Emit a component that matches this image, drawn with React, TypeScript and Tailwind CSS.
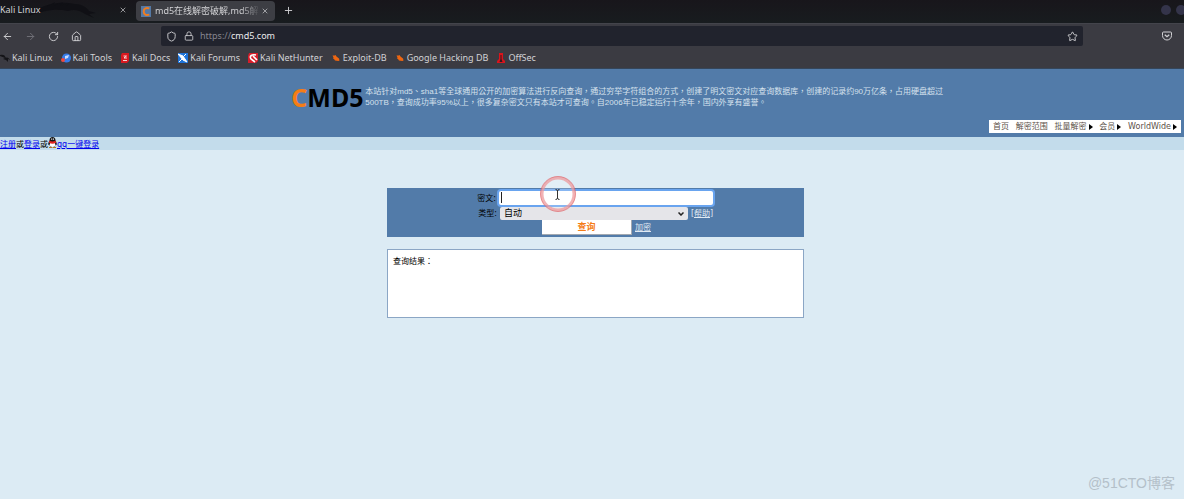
import {
    ArrowLeft,
    ArrowRight,
    Home,
    Lock,
    Plus,
    RotateCw,
    Shield,
    Star,
    X,
} from "lucide-react";
import type { ReactNode } from "react";

export default function App() {
    return (
        <div className="relative flex min-h-screen flex-col overflow-hidden bg-[#dcebf4] font-['DejaVu_Sans','Noto_Sans_CJK_TC',sans-serif] text-[8px] text-black">
            <BrowserChrome />
            <SiteHeader />
            <LoginBar />

            <main className="pt-[38px] pl-[7px]">
                <SearchForm />
                <section className="mx-auto mt-3 h-[69px] w-[417px] border border-[#8ba6c5] bg-white px-[5px] py-[6px] leading-3">
                    查询结果：
                </section>
            </main>

            <div className="absolute right-[9px] bottom-[6px] font-['Liberation_Sans','Noto_Sans_CJK_SC',sans-serif] text-[14px] leading-5 text-[#b4c0c9]">
                @51CTO博客
            </div>
        </div>
    );
}

function BrowserChrome() {
    return (
        <div className="bg-[#3b3b42] font-['Noto_Sans','Noto_Sans_CJK_SC',sans-serif] text-[9px] text-[#d2d2d5]">
            {/* Tab strip */}
            <div className="relative flex h-6 items-start overflow-hidden border-b border-[#43444b] bg-linear-to-b from-[#18161b] to-[#181c1f]">
                <svg className="absolute top-0 left-7 h-5 w-[70px]" viewBox="0 0 70 20" fill="#101015" aria-hidden="true">
                    <path d="M0 16C12 5 29 0 47 4c8 0 12 4 14 7l7 2-7 1 5 4-9-4c-6-4-11-5-17-3-13-3-25 0-40 5z" />
                    <path d="m18 7 9-5-2 4 10-4-3 4 9-3-3 4z" />
                </svg>
                <div className="relative flex h-5 w-[136px] items-center justify-between pr-[9px]">
                    <span>Kali Linux</span>
                    <button aria-label="Close Kali Linux">
                        <X className="h-2 w-2" />
                    </button>
                </div>
                <div className="relative mt-px flex h-5 w-[139px] items-center rounded-sm bg-[#3d3e44] pr-[6px] pl-[5px]">
                    <svg className="mr-1 h-[11px] w-[10px] shrink-0" viewBox="0 0 10 11" aria-hidden="true">
                        <rect width="10" height="11" fill="#5579a5" />
                        <path d="M8.3 2.4C5.2 1.3 2.7 2.5 2.7 5.5s2.5 4.2 5.6 3.1" fill="none" stroke="#ef7c20" strokeWidth="2" />
                    </svg>
                    <span className="flex-1 whitespace-nowrap mask-r-from-80%">
                        md5在线解密破解,md5解
                    </span>
                    <button aria-label="Close md5">
                        <X className="h-2 w-2" />
                    </button>
                </div>
                <button aria-label="New tab" className="mt-[5px] ml-2">
                    <Plus className="h-[11px] w-[11px]" />
                </button>
                <div className="mt-[5px] -mr-[2px] ml-auto flex gap-[5px]">
                    <span className="h-[10px] w-[10px] rounded-full bg-[#34344a]" />
                    <span className="h-[10px] w-[10px] rounded-full bg-[#34344a]" />
                </div>
            </div>

            {/* Address bar */}
            <div className="flex h-6 items-center pr-3 pl-[2px]">
                <div className="flex w-[159px] items-center gap-3">
                    <button aria-label="Back">
                        <ArrowLeft className="h-[11px] w-[11px]" />
                    </button>
                    <button aria-label="Forward" className="text-[#73737b]">
                        <ArrowRight className="h-[11px] w-[11px]" />
                    </button>
                    <button aria-label="Reload">
                        <RotateCw className="h-[11px] w-[11px]" />
                    </button>
                    <button aria-label="Home">
                        <Home className="h-[11px] w-[11px]" />
                    </button>
                </div>
                <div className="flex h-5 flex-1 items-center rounded-xs bg-[#21232d] pr-[5px] pl-[5px]">
                    <Shield className="h-[11px] w-[11px]" />
                    <Lock className="ml-[7px] h-[10px] w-[10px]" />
                    <a href="https://cmd5.com" className="ml-[6px] text-[#ececef]">
                        <span className="text-[#85858d]">https://</span>cmd5.com
                    </a>
                    <button aria-label="Bookmark" className="ml-auto">
                        <Star className="h-[11px] w-[11px]" />
                    </button>
                </div>
                <button aria-label="Pocket" className="ml-[79px]">
                    <svg className="h-[10px] w-[10px]" viewBox="0 0 20 20" fill="none" stroke="currentColor" strokeWidth="2">
                        <path d="M3 2h14q2 0 2 2v5a9 9 0 0 1-18 0V4q0-2 2-2z" />
                        <path d="m5.5 7.5 4.5 4 4.5-4" strokeWidth="2.5" />
                    </svg>
                </button>
            </div>

            {/* Bookmarks */}
            <nav className="flex h-[21px] items-center gap-2 border-b border-[#34465b]">
                <Bookmark label="Kali Linux">
                    <path d="M0 2c3-1 5 0 6 3 1-1 3 0 4 2L8 6v3L6 7 3 6l2-1-5-2z" fill="#141418" />
                </Bookmark>
                <Bookmark label="Kali Tools">
                    <circle cx="5.5" cy="5" r="4.5" fill="#367be8" />
                    <path d="m4 3 4-1-1 3-3 1z" fill="#c8dcff" />
                    <circle cx="2" cy="7" r="2" fill="#ed4941" />
                </Bookmark>
                <Bookmark label="Kali Docs">
                    <path d="M2 0h7v8L7 10H1V2z" fill="#d71920" />
                    <path d="M3.5 3h3L4 5h3M3 7.500h4" stroke="#fff" strokeWidth=".8" fill="none" />
                </Bookmark>
                <Bookmark label="Kali Forums">
                    <path d="M0 0h10v10H0z" fill="#1e73d8" />
                    <path d="m0 1 5 2 4 6-4-2zM8 1 6 3M1 9l3-3" fill="#fff" stroke="#fff" />
                </Bookmark>
                <Bookmark label="Kali NetHunter">
                    <path d="M1 0h9v8L8 10H0V3z" fill="#d71d2a" />
                    <path d="M8 2C4 1 1 3 3 6l4 3M5 3l4 4" fill="none" stroke="#fff" strokeWidth="1.6" />
                </Bookmark>
                <Bookmark label="Exploit-DB">
                    <Bug />
                </Bookmark>
                <Bookmark label="Google Hacking DB">
                    <Bug />
                </Bookmark>
                <Bookmark label="OffSec">
                    <path d="M3 0h4v6l2 2v2H1V8l2-2z" fill="#d9141c" />
                    <path d="M4.500 2h1v4l1 3h-3l1-3z" fill="#34191f" />
                </Bookmark>
            </nav>
        </div>
    );
}

function Bug() {
    return (
        <path
            d="m1.500 2.500 2 0 1-.5 1 1.500 2.500 2 .5 2-1 .5-2-.2-1.500-.3-1-1.500L2 5.500l.5-1z"
            fill="#ee6611"
        />
    );
}

function Bookmark({ label, children }: { label: string; children: ReactNode }) {
    return (
        <a href="#" className="flex items-center gap-[2px] whitespace-nowrap">
            <svg className="h-[10px] w-[10px]" viewBox="0 0 10 10" aria-hidden="true">
                {children}
            </svg>
            {label}
        </a>
    );
}

function SiteHeader() {
    return (
        <header className="flex h-[68px] flex-col justify-between bg-[#527ba9] pt-[11px] pb-1">
            <div className="flex items-center pl-[24.6%]">
                <a href="#" className="w-[74px] font-['Noto_Sans',sans-serif] text-[25px] leading-[34px] font-bold">
                    <span className="text-[#f57d16]">C</span>MD5
                </a>
                <p className="font-['Liberation_Sans','Noto_Sans_CJK_TC',sans-serif] leading-[11px] whitespace-nowrap text-[#d5e1ed]">
                    本站针对md5、sha1等全球通用公开的加密算法进行反向查询，通过穷举字符组合的方式，创建了明文密文对应查询数据库，创建的记录约90万亿条，占用硬盘超过
                    <br />
                    500TB，查询成功率95%以上，很多复杂密文只有本站才可查询。自2006年已稳定运行十余年，国内外享有盛誉。
                </p>
            </div>
            <nav className="mr-[3px] flex h-[13px] w-[192px] items-center justify-between self-end bg-white px-1 whitespace-nowrap text-[#5c5148]">
                <a href="#">首页</a>
                <a href="#">解密范围</a>
                <MenuLink label="批量解密" />
                <MenuLink label="会员" />
                <MenuLink label="WorldWide" />
            </nav>
        </header>
    );
}

function MenuLink({ label }: { label: string }) {
    return (
        <a href="#" className="flex items-center gap-[2px]">
            {label}
            <svg className="h-[6px] w-1" viewBox="0 0 4 6" fill="#000" aria-hidden="true">
                <path d="M0 0l4 3-4 3z" />
            </svg>
        </a>
    );
}

function LoginBar() {
    return (
        <div className="flex h-[13px] items-center bg-[#c3dceb] pt-[2px]">
            <a href="#" className="text-[#0000ee] underline">注册</a>或
            <a href="#" className="text-[#0000ee] underline">登录</a>或
            <svg className="-mt-[5px] h-[11px] w-[9px]" viewBox="0 0 9 11" aria-hidden="true">
                <path d="M4.500 0C2.500 0 1.500 1.500 1.500 3.500.5 5 0 6.500.3 8l1-.5C2 9.500 3 10.300 4.500 10.300S7 9.500 7.700 7.500l1 .5C9 6.500 8.500 5 7.500 3.500 7.500 1.500 6.500 0 4.500 0z" fill="#171717" />
                <path d="M2 6h5q1 4-2.500 4T2 6z" fill="#fff" />
                <path d="M1.300 3.800q3.200 1.200 6.400 0l.3 2q-3.500 1.700-7 0z" fill="#e32620" />
                <path d="M3.200 1.500h1v1.300h-1zM4.900 1.500h1v1.300h-1z" fill="#fff" />
                <path d="M1 10h3v1H1zM5 10h3v1H5z" fill="#b9771d" />
            </svg>
            <a href="#" className="text-[#0000ee] underline">qq一键登录</a>
        </div>
    );
}

function SearchForm() {
    return (
        <form
            className="relative mx-auto flex h-[49px] w-[417px] flex-col bg-[#527ba9] pt-[2px]"
            onSubmit={(e) => e.preventDefault()}
        >
            <div className="flex h-4 items-center">
                <label htmlFor="hash" className="w-[109px] pt-px text-right">密文:</label>
                <input
                    id="hash"
                    type="text"
                    className="ml-[3px] h-[14px] w-[214px] rounded-xs bg-white px-1 ring-2 ring-[#69a4ef] outline-none"
                />
            </div>
            <div className="flex h-[14px] items-center">
                <label htmlFor="kind" className="w-[110px] pt-px text-right">类型:</label>
                <div className="relative ml-[3px] h-[13px] w-[188px]">
                    <select
                        id="kind"
                        className="block h-full w-full appearance-none rounded-xs bg-[#e5e5e9] px-1 text-[9px] leading-[13px] outline-none"
                    >
                        <option>自动</option>
                    </select>
                    <svg className="pointer-events-none absolute top-[5px] right-1 h-1 w-[6px]" viewBox="0 0 6 4" fill="none" stroke="#222" strokeWidth="1.500">
                        <path d="m.5.5 2.500 2.500L5.500.5" />
                    </svg>
                </div>
                <a href="#" className="ml-[3px] pt-px text-[#e0eaf3] underline">[帮助]</a>
            </div>
            <div className="flex h-[15px] items-center pl-[155px]">
                <button type="submit" className="h-[15px] w-[90px] border-r border-b border-[#a3a9b0] bg-white text-[9px] leading-3 font-bold text-[#f57d16]">
                    查询
                </button>
                <a href="#" className="ml-[3px] pt-px text-[#e0eaf3] underline">加密</a>
            </div>

            {/* Text caret */}
            <span className="absolute top-1 left-[114px] h-[11px] w-px bg-[#222]" />
            {/* Pointer with its click halo */}
            <svg className="pointer-events-none absolute -top-3 left-[153px] h-9 w-9" viewBox="0 0 36 36" fill="none">
                <circle cx="18" cy="18" r="16" fill="#fff" fillOpacity=".2" stroke="#ee9a9c" strokeOpacity=".75" strokeWidth="3" />
                <circle cx="18" cy="18" r="17.500" stroke="#dd5c60" strokeOpacity=".6" />
                <path d="M15.500 13.500q2 0 2 1.500v7q0 1.500-2 1.500M19.500 13.500q-2 0-2 1.500v7q0 1.500 2 1.500" stroke="#333" />
            </svg>
        </form>
    );
}
